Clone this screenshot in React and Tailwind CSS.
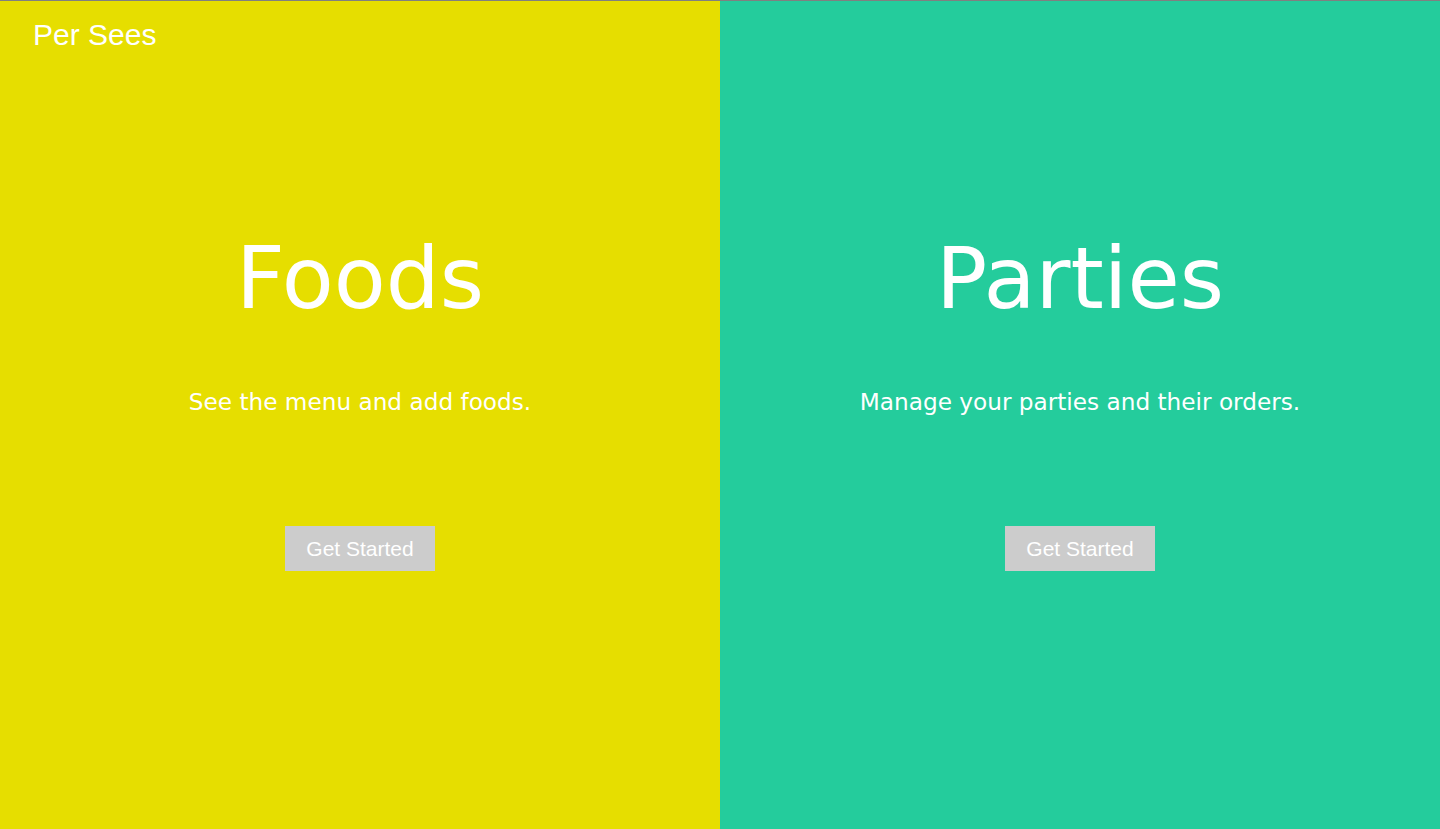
export default function App() {
  const panels = [
    { title: 'Foods', text: 'See the menu and add foods.', bg: 'bg-[#e6de00]' },
    { title: 'Parties', text: 'Manage your parties and their orders.', bg: 'bg-[#24cc9c]' },
  ];

  return (
    <div className="relative flex h-screen w-full border-t border-[#808080]">
      {/* brand */}
      <div className="absolute left-[33px] top-[19px] text-[30px] leading-none text-white font-['Liberation_Sans',Arial,sans-serif]">
        Per Sees
      </div>

      {panels.map((p) => (
        <section key={p.title}
          className={`flex flex-1 flex-col items-center pt-[228px] text-white ${p.bg}`}>
          <h1 className="text-[85px] leading-[100px] font-['DejaVu_Sans',Verdana,sans-serif]">{p.title}</h1>
          <p className="mt-[58px] text-[23.2px] leading-[30px] font-['DejaVu_Sans',Verdana,sans-serif]">{p.text}</p>
          <button className="mt-[109px] h-[45px] w-[150px] bg-[#cccccc] text-[21px] text-white font-['Liberation_Sans',Arial,sans-serif]">
            Get Started
          </button>
        </section>
      ))}
    </div>
  );
}
